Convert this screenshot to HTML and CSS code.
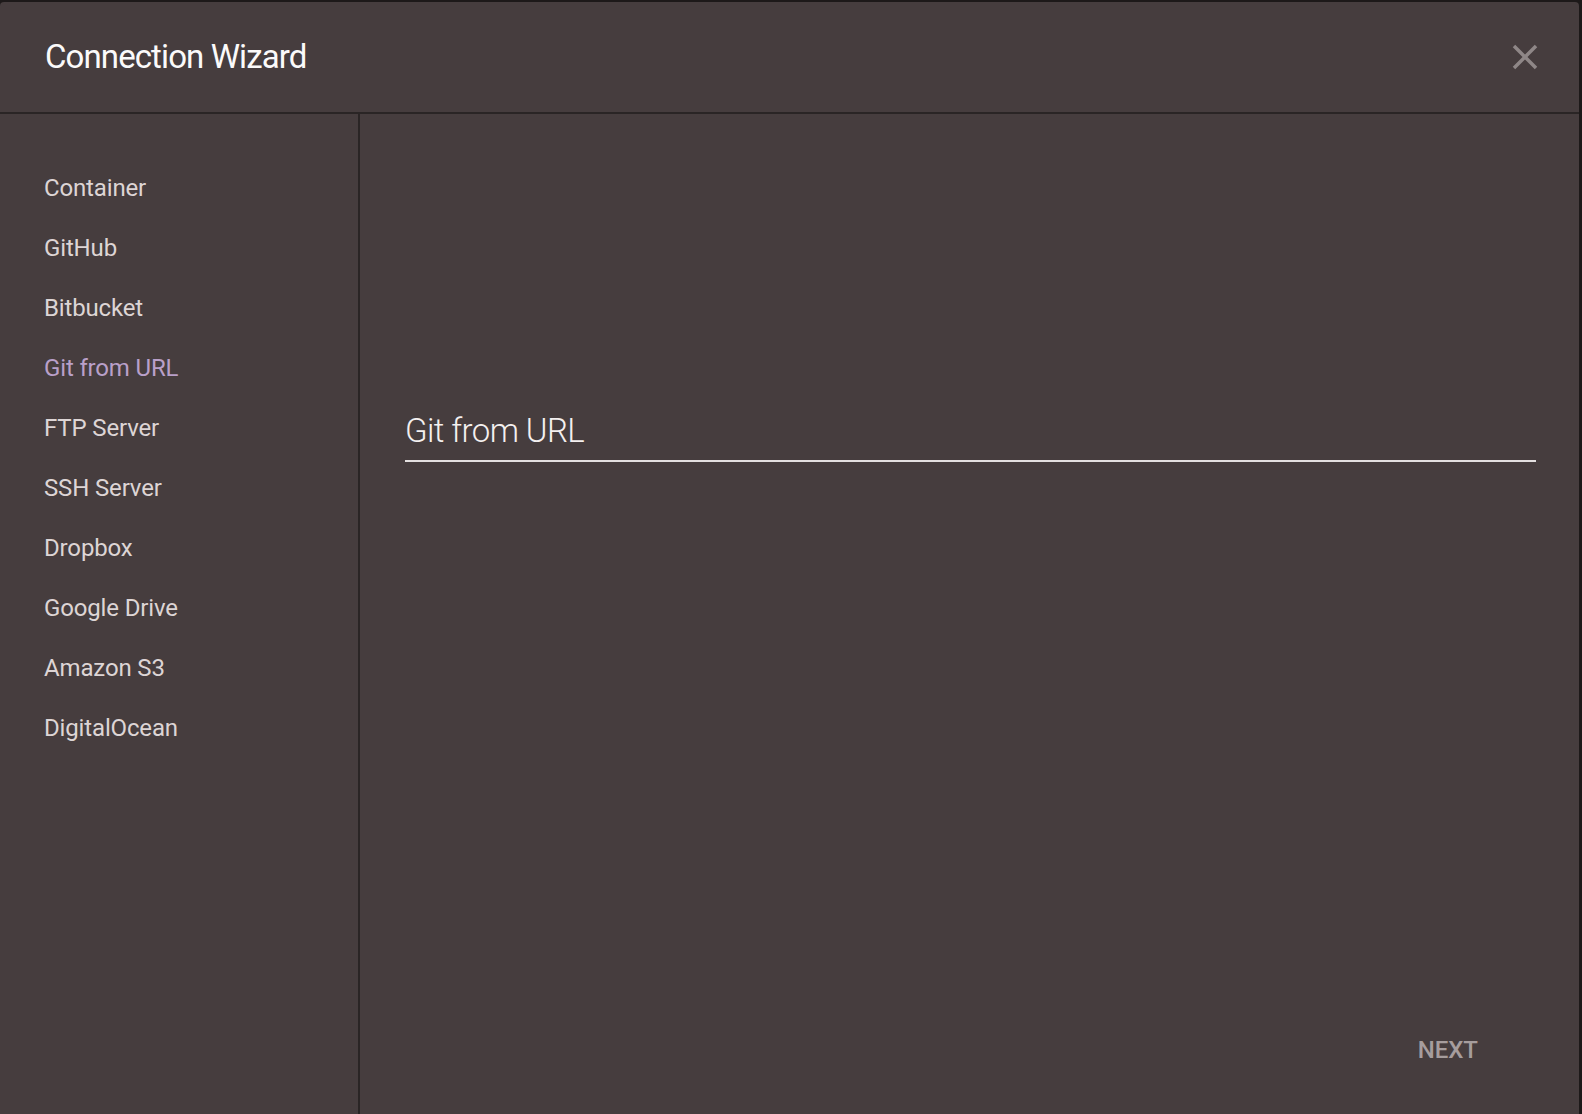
FILE: index.html
```html
<!DOCTYPE html>
<html lang="en">
<head>
<meta charset="utf-8">
<title>Connection Wizard</title>
<link rel="stylesheet" href="styles.css">
</head>
<body>
<div class="dialog">
  <header class="header">
    <h1 class="title">Connection Wizard</h1>
    <button class="close" aria-label="Close">
      <svg viewBox="0 0 24 24" width="42" height="42"><path d="M19 6.41L17.59 5 12 10.59 6.41 5 5 6.41 10.59 12 5 17.59 6.41 19 12 13.41 17.59 19 19 17.59 13.41 12z"/></svg>
    </button>
  </header>
  <div class="body">
    <nav class="sidebar">
      <a class="nav-item">Container</a>
      <a class="nav-item">GitHub</a>
      <a class="nav-item">Bitbucket</a>
      <a class="nav-item active">Git from URL</a>
      <a class="nav-item">FTP Server</a>
      <a class="nav-item">SSH Server</a>
      <a class="nav-item">Dropbox</a>
      <a class="nav-item">Google Drive</a>
      <a class="nav-item">Amazon S3</a>
      <a class="nav-item">DigitalOcean</a>
    </nav>
    <main class="main">
      <h2 class="section-title">Git from URL</h2>
      <div class="footer">
        <button class="next">NEXT</button>
      </div>
    </main>
  </div>
</div>
</body>
</html>
```
FILE: styles.css
```css
html, body {
  margin: 0;
  padding: 0;
  height: 100%;
  overflow: hidden;
}
body {
  background: #1d1919;
  font-family: Roboto, "Liberation Sans", sans-serif;
}
.dialog {
  margin-top: 2px;
  width: 1579px;
  height: 1116px;
  background: #463d3e;
  border-radius: 4px;
  display: flex;
  flex-direction: column;
}
.header {
  height: 110px;
  flex: none;
  border-bottom: 2px solid #2a2525;
  display: flex;
  align-items: center;
  justify-content: space-between;
  padding: 0 33px 0 45px;
}
.title {
  margin: 0;
  font-size: 33px;
  font-weight: 400;
  letter-spacing: -0.9px;
  color: #fbfafa;
  line-height: 40px;
}
.close {
  background: none;
  border: 0;
  padding: 0;
  width: 42px;
  height: 42px;
  cursor: pointer;
  margin-bottom: 1px;
}
.close svg {
  display: block;
  fill: #8f8787;
}
.body {
  flex: 1;
  display: flex;
  min-height: 0;
}
.sidebar {
  width: 360px;
  flex: none;
  border-right: 2px solid #2a2525;
  padding-top: 44px;
  box-sizing: border-box;
  display: flex;
  flex-direction: column;
}
.nav-item {
  display: block;
  padding-left: 44px;
  font-size: 24px;
  letter-spacing: -0.15px;
  line-height: 60px;
  color: #ddd5d5;
  cursor: pointer;
}
.nav-item.active {
  color: #b9a0c9;
}
.main {
  flex: 1;
  display: flex;
  flex-direction: column;
  padding: 0 43px 0 45px;
}
.section-title {
  margin: 297px 0 0;
  font-size: 33px;
  font-weight: 300;
  letter-spacing: -0.6px;
  line-height: 40px;
  color: #f4f0f0;
  padding-bottom: 9px;
  border-bottom: 2px solid #e4e0e0;
}
.footer {
  margin-top: auto;
  display: flex;
  justify-content: flex-end;
  padding: 0 42px 50px 0;
}
.next {
  background: none;
  border: 0;
  font-family: Roboto, "Liberation Sans", sans-serif;
  font-size: 24px;
  font-weight: 500;
  line-height: 36px;
  padding: 0 16px;
  color: #a69d9d;
  cursor: pointer;
}
```
